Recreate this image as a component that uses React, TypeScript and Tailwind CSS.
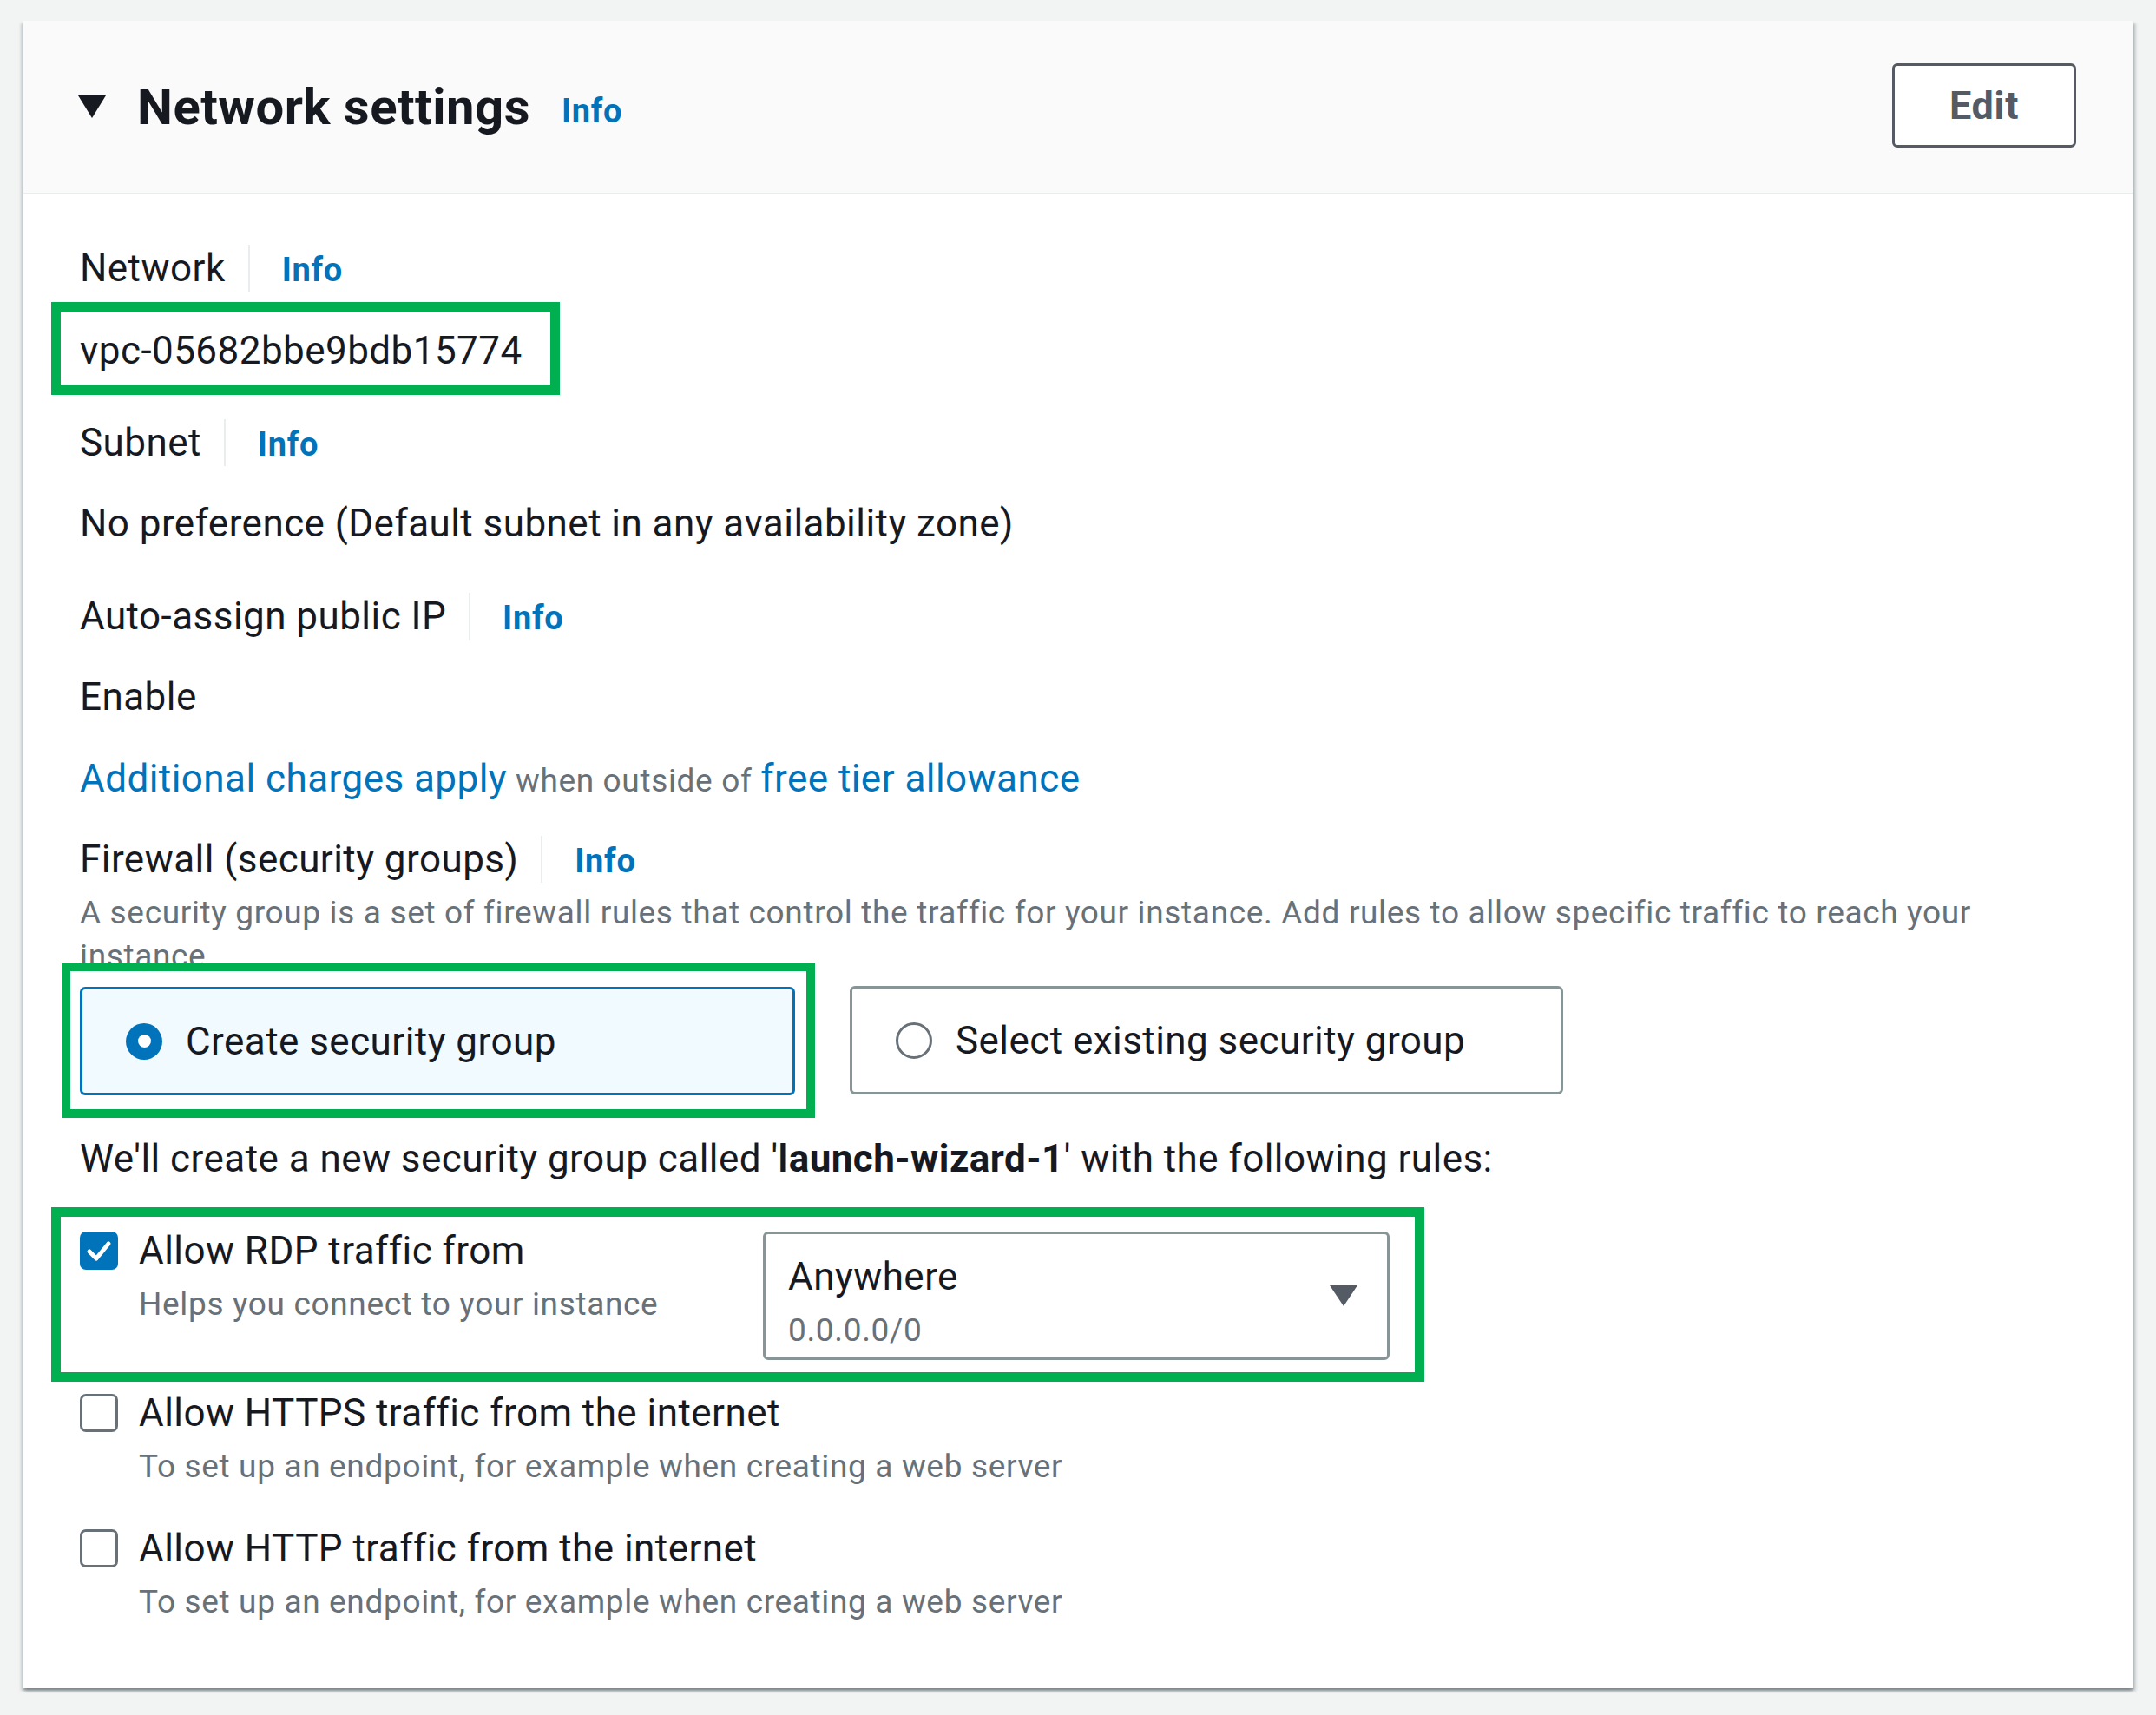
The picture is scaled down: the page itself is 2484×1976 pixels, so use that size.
import React from "react";

function LabelInfo({ label }: { label: string }) {
  return (
    <div className="flex items-center h-[58px]">
      <span className="text-[44px] leading-[58px]">{label}</span>
      <span className="ml-[26px] w-[2px] h-[54px] bg-[#eaeded]" />
      <span className="ml-[37px] text-[38px] font-bold text-[#0073bb] leading-[58px] pt-[4px] tracking-[0.7px]">Info</span>
    </div>
  );
}

function CheckedBox() {
  return (
    <svg viewBox="0 0 44 44" className="w-[44px] h-[44px] shrink-0">
      <rect width="44" height="44" rx="7" fill="#0073bb" />
      <path d="M11 23 L19 31 L33 14" stroke="white" strokeWidth="5" fill="none" strokeLinecap="round" strokeLinejoin="round" />
    </svg>
  );
}

function EmptyBox() {
  return <div className="w-[44px] h-[44px] shrink-0 rounded-[7px] border-[3px] border-[#687078] bg-white" />;
}

function CheckRow({ label, desc }: { label: string; desc: string }) {
  return (
    <div>
      <div className="flex items-center h-[58px]">
        <EmptyBox />
        <span className="ml-[24px] text-[44px] leading-[58px]">{label}</span>
      </div>
      <div className="mt-[10px] pl-[68px] text-[37px] leading-[46px] text-[#687078] tracking-[0.65px]">{desc}</div>
    </div>
  );
}

export default function App() {
  return (
    <div className="w-[2484px] min-h-[1976px] bg-[#f2f3f3] pt-[24px] pl-[27px] text-[#16191f] tracking-[0.45px] font-['Roboto','Liberation_Sans',sans-serif]">
      <div className="w-[2431px] h-[1921px] bg-white shadow-[0_3px_3px_0_rgba(0,28,36,0.3),3px_3px_3px_0_rgba(0,28,36,0.15),-3px_3px_3px_0_rgba(0,28,36,0.15)]">
        {/* Header */}
        <div className="h-[200px] bg-[#fafafa] border-b-2 border-[#eaeded] flex items-center justify-between pl-[63px] pr-[66px]">
          <div className="flex items-center">
            <svg viewBox="0 0 32 26" className="w-[32px] h-[26px]">
              <path d="M0 0 H32 L16 26 Z" fill="#16191f" />
            </svg>
            <h2 className="ml-[36px] text-[58px] font-bold leading-none tracking-[0.5px]">Network settings</h2>
            <span className="ml-[36px] mt-[10px] text-[38px] font-bold text-[#0073bb] leading-none tracking-[0.7px]">Info</span>
          </div>
          <button className="w-[212px] h-[97px] mt-[-4px] border-[3px] border-[#545b64] rounded-[6px] bg-white text-[45px] font-bold text-[#545b64] leading-none tracking-[0.7px]">
            Edit
          </button>
        </div>

        {/* Body */}
        <div className="pl-[65px] pr-[66px] pt-[56px]">
          <LabelInfo label="Network" />
          <div className="mt-[10px] ml-[-33px] w-[586px] h-[107px] border-[11px] border-[#00b050] flex items-center pl-[22px] pt-[4px]">
            <span className="text-[44px] leading-[58px]">vpc-05682bbe9bdb15774</span>
          </div>

          <div className="mt-[26px]">
            <LabelInfo label="Subnet" />
          </div>
          <div className="mt-[35px] h-[58px] text-[44px] leading-[58px]">
            No preference (Default subnet in any availability zone)
          </div>

          <div className="mt-[49px]">
            <LabelInfo label="Auto-assign public IP" />
          </div>
          <div className="mt-[35px] h-[58px] text-[44px] leading-[58px]">Enable</div>

          <div className="mt-[36px] h-[58px] leading-[58px]">
            <span className="text-[44px] text-[#0073bb]">Additional charges apply</span>
            <span className="text-[37px] text-[#687078] tracking-[0.65px]"> when outside of </span>
            <span className="text-[44px] text-[#0073bb]">free tier allowance</span>
          </div>

          <div className="mt-[35px]">
            <LabelInfo label="Firewall (security groups)" />
          </div>
          <div className="mt-[8px] text-[37px] leading-[50px] text-[#687078] tracking-[0.65px]">
            A security group is a set of firewall rules that control the traffic for your instance. Add rules to allow specific traffic to reach your
            <br />
            instance.
          </div>

          {/* Tiles */}
          <div className="relative z-10 mt-[-18px] flex items-center">
            <div className="ml-[-21px] w-[868px] h-[179px] border-[10px] border-[#00b050] bg-white pl-[11px] pt-[18px]">
              <div className="w-[824px] h-[125px] rounded-[6px] border-[3px] border-[#0073bb] bg-[#f1faff] flex items-center pl-[50px]">
                <div className="w-[42px] h-[42px] rounded-full bg-[#0073bb] flex items-center justify-center shrink-0">
                  <div className="w-[15px] h-[15px] rounded-full bg-white" />
                </div>
                <span className="ml-[27px] text-[44px] leading-[58px]">Create security group</span>
              </div>
            </div>
            <div className="ml-[40px] w-[822px] h-[125px] rounded-[6px] border-[3px] border-[#879596] bg-white flex items-center pl-[50px]">
              <div className="w-[42px] h-[42px] rounded-full border-[3px] border-[#687078] bg-white shrink-0" />
              <span className="ml-[27px] text-[44px] leading-[58px]">Select existing security group</span>
            </div>
          </div>

          <div className="mt-[18px] h-[58px] text-[44px] leading-[58px]">
            We'll create a new security group called '<span className="font-bold">launch-wizard-1</span>' with the following rules:
          </div>

          {/* RDP row */}
          <div className="mt-[27px] ml-[-33px] w-[1582px] h-[201px] border-[11px] border-[#00b050] flex items-start pl-[22px] pt-[10px]">
            <div className="w-[787px] shrink-0">
              <div className="flex items-center h-[58px]">
                <CheckedBox />
                <span className="ml-[24px] text-[44px] leading-[58px]">Allow RDP traffic from</span>
              </div>
              <div className="mt-[10px] pl-[68px] text-[37px] leading-[46px] text-[#687078] tracking-[0.65px]">Helps you connect to your instance</div>
            </div>
            <div className="mt-[7px] w-[722px] h-[148px] rounded-[6px] border-[3px] border-[#879596] bg-white flex items-center justify-between pl-[26px] pr-[34px]">
              <div className="flex flex-col pt-[12px]">
                <span className="text-[44px] leading-[58px]">Anywhere</span>
                <span className="mt-[10px] text-[37px] leading-[46px] text-[#687078] tracking-[0.65px]">0.0.0.0/0</span>
              </div>
              <svg viewBox="0 0 32 24" className="w-[32px] h-[24px]">
                <path d="M0 0 H32 L16 24 Z" fill="#545b64" />
              </svg>
            </div>
          </div>

          <div className="mt-[7px]">
            <CheckRow label="Allow HTTPS traffic from the internet" desc="To set up an endpoint, for example when creating a web server" />
          </div>
          <div className="mt-[42px]">
            <CheckRow label="Allow HTTP traffic from the internet" desc="To set up an endpoint, for example when creating a web server" />
          </div>
        </div>
      </div>
    </div>
  );
}
